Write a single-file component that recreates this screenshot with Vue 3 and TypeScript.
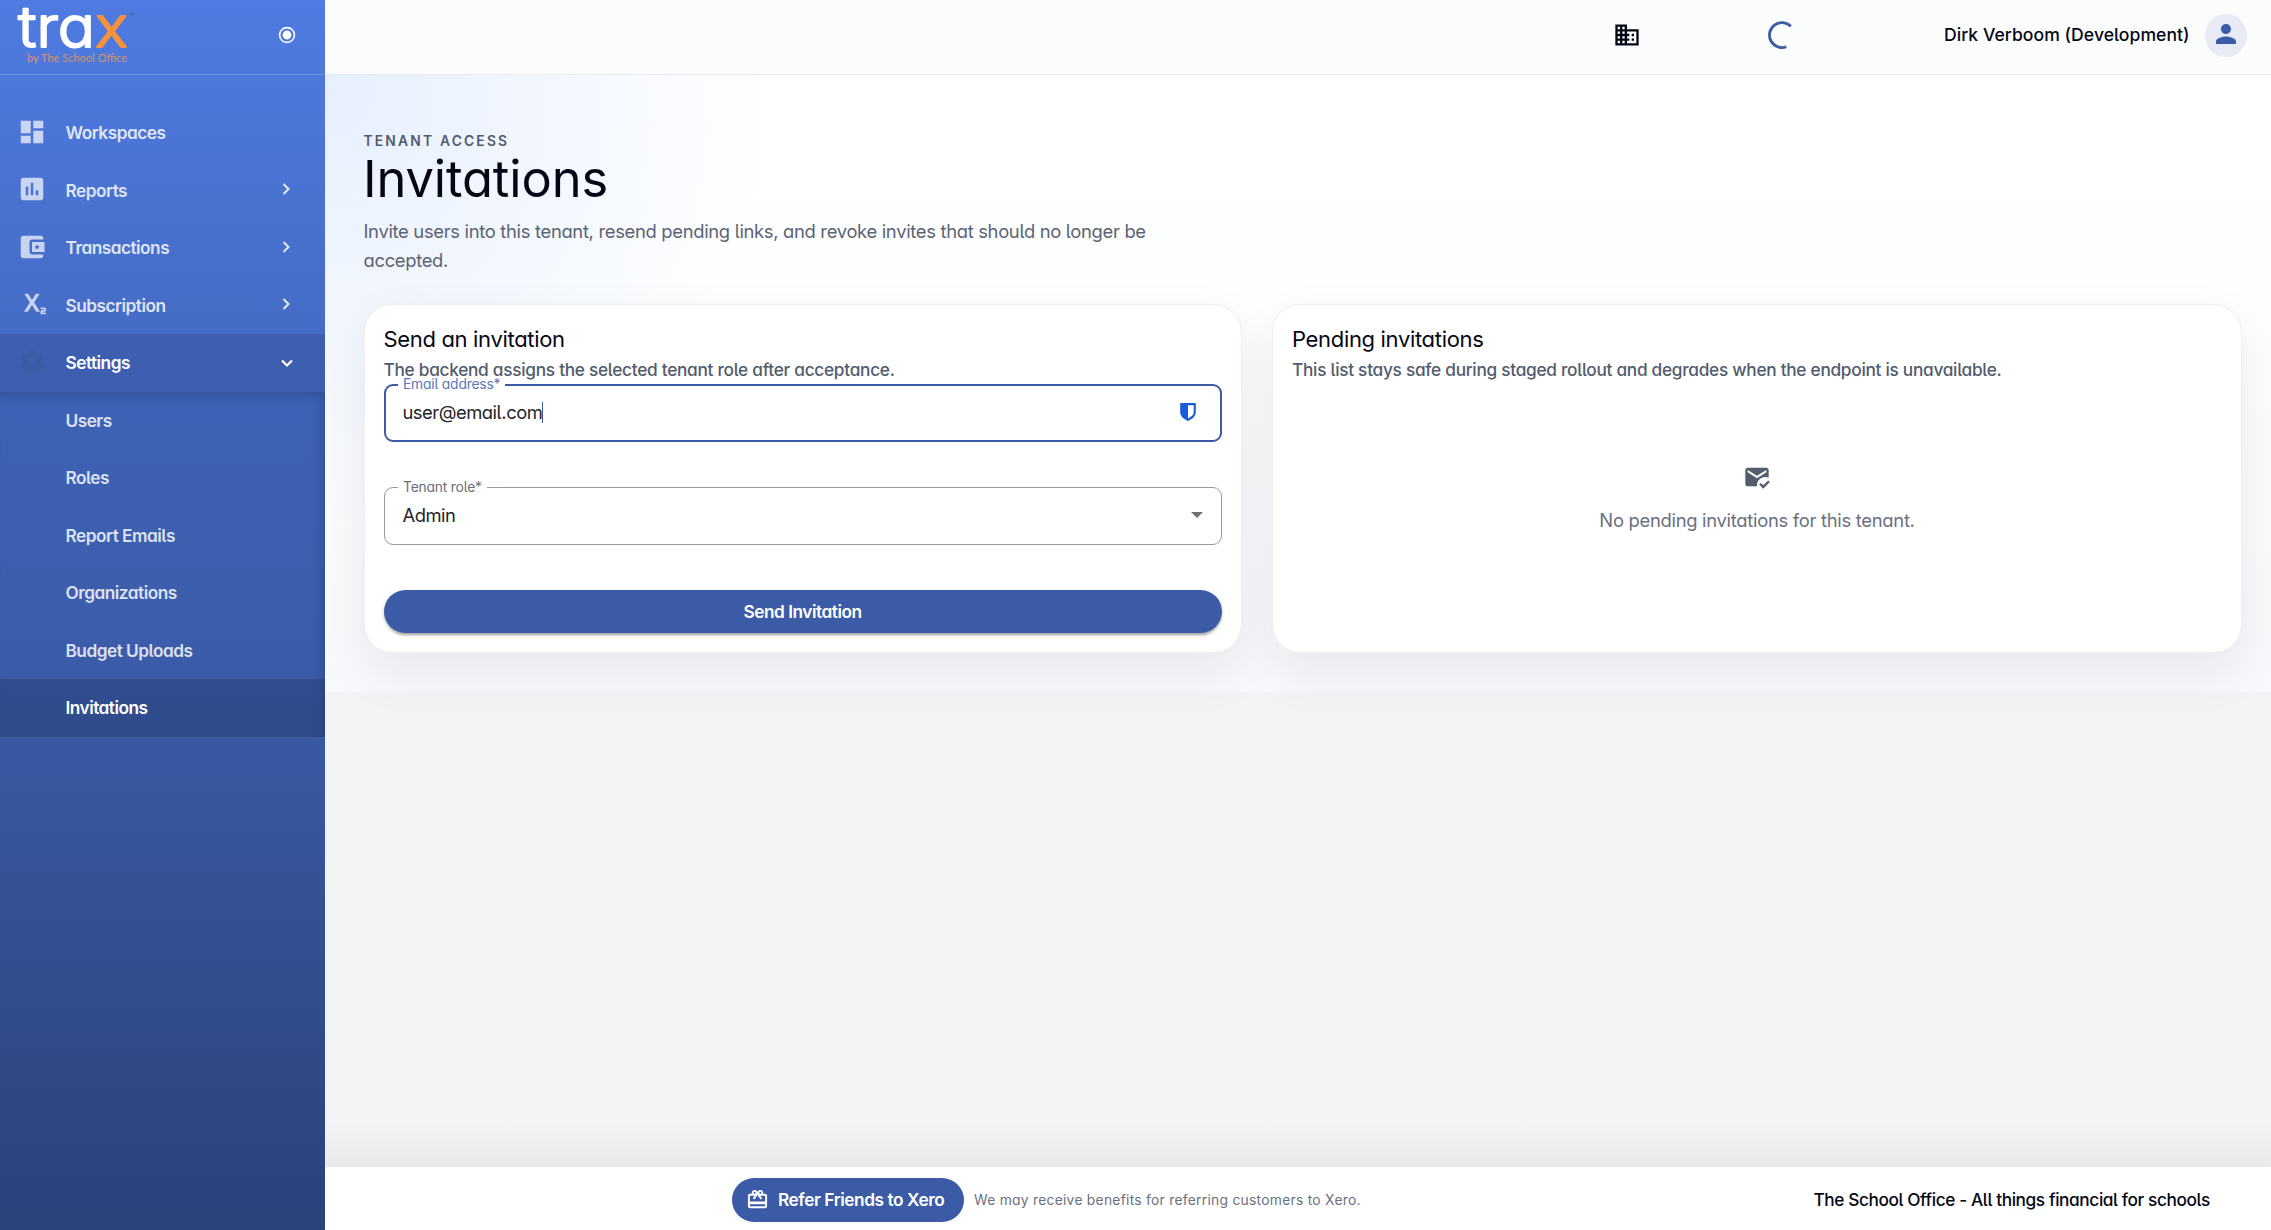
<script setup lang="ts">
interface NavItem {
  label: string
  icon: string
  arrow: boolean
}

const navItems: NavItem[] = [
  { label: 'Workspaces', arrow: false, icon: 'M3 13h8V3H3v10zm0 8h8v-6H3v6zm10 0h8V11h-8v10zm0-18v6h8V3h-8z' },
  { label: 'Reports', arrow: true, icon: 'M19 3H5c-1.1 0-2 .9-2 2v14c0 1.1.9 2 2 2h14c1.1 0 2-.9 2-2V5c0-1.1-.9-2-2-2zM9 17H7v-7h2v7zm4 0h-2V7h2v10zm4 0h-2v-4h2v4z' },
  { label: 'Transactions', arrow: true, icon: 'M21 18v1c0 1.1-.9 2-2 2H5c-1.11 0-2-.9-2-2V5c0-1.1.89-2 2-2h14c1.1 0 2 .9 2 2v1h-9c-1.11 0-2 .9-2 2v8c0 1.1.89 2 2 2h9zm-9-2h10V8H12v8zm4-2.5c-.83 0-1.5-.67-1.5-1.5s.67-1.5 1.5-1.5 1.5.67 1.5 1.5-.67 1.5-1.5 1.5z' },
  { label: 'Subscription', arrow: true, icon: 'M22 18h-2v1h3v1h-4v-2c0-.55.45-1 1-1h2v-1h-3v-1h3c.55 0 1 .45 1 1v1c0 .55-.45 1-1 1zM5.88 18h2.66l3.4-5.42h.12l3.4 5.42h2.66l-4.65-7.27L17.81 4h-2.68l-3.07 4.99h-.12L8.87 4H6.19l4.32 6.73L5.88 18z' },
]

const settingsItems: string[] = ['Users', 'Roles', 'Report Emails', 'Organizations', 'Budget Uploads', 'Invitations']
const current = 'Invitations'
</script>

<template>
  <div class="app">
    <aside class="sidebar">
      <div class="brand">
        <svg class="logo" width="140" height="74" viewBox="0 0 140 74">
          <g class="wordmark" font-size="57">
            <text x="18" y="47.3" textLength="77" lengthAdjust="spacingAndGlyphs" fill="#fff" stroke="#fff">tra</text>
            <text x="95" y="47.3" textLength="33" lengthAdjust="spacingAndGlyphs" fill="#f5923e" stroke="#f5923e">x</text>
          </g>
          <text class="byline" x="27" y="62" textLength="100">by The School Office</text>
          <text class="tm" x="129" y="15.500">TM</text>
        </svg>
        <svg class="pin" width="18" height="18" viewBox="0 0 18 18">
          <circle cx="9" cy="9" r="7.4" fill="none" stroke="#fff" stroke-width="1.6" />
          <circle cx="9" cy="9" r="4.4" fill="#fff" />
        </svg>
      </div>
      <nav class="nav">
        <a v-for="item in navItems" :key="item.label" class="row">
          <svg class="row-icon" :class="{ heavy: item.label === 'Subscription' }" viewBox="0 0 24 24"><path :d="item.icon" /></svg>
          <span>{{ item.label }}</span>
          <svg v-if="item.arrow" class="arrow" viewBox="0 0 12 12"><path d="M3.5 1l5 5-5 5" /></svg>
        </a>
        <a class="row open">
          <svg class="row-icon gear" viewBox="0 0 24 24"><path d="M19.14 12.94c.04-.3.06-.61.06-.94 0-.32-.02-.64-.07-.94l2.03-1.58c.18-.14.23-.41.12-.61l-1.92-3.32c-.12-.22-.37-.29-.59-.22l-2.39.96c-.5-.38-1.03-.7-1.62-.94l-.36-2.54c-.04-.24-.24-.41-.48-.41h-3.84c-.24 0-.43.17-.47.41l-.36 2.54c-.59.24-1.13.57-1.62.94l-2.39-.96c-.22-.08-.47 0-.59.22L2.74 8.87c-.12.21-.08.47.12.61l2.03 1.58c-.05.3-.09.63-.09.94s.02.64.07.94l-2.03 1.58c-.18.14-.23.41-.12.61l1.92 3.32c.12.22.37.29.59.22l2.39-.96c.5.38 1.03.7 1.62.94l.36 2.54c.05.24.24.41.48.41h3.84c.24 0 .44-.17.47-.41l.36-2.54c.59-.24 1.13-.56 1.62-.94l2.39.96c.22.08.47 0 .59-.22l1.92-3.32c.12-.22.07-.47-.12-.61l-2.01-1.58zM12 15.6c-1.98 0-3.6-1.62-3.6-3.6s1.62-3.6 3.6-3.6 3.6 1.62 3.6 3.6-1.62 3.6-3.6 3.6z" /></svg>
          <span>Settings</span>
          <svg class="arrow down" viewBox="0 0 12 12"><path d="M1 3.5l5 5 5-5" /></svg>
        </a>
        <div class="submenu">
          <a v-for="label in settingsItems" :key="label" class="row sub" :class="{ active: label === current }">
            <span>{{ label }}</span>
          </a>
        </div>
      </nav>
    </aside>

    <div class="main">
      <header class="topbar">
        <svg class="building" viewBox="0 0 24 24"><path d="M12 7V3H2v18h20V7H12zM6 19H4v-2h2v2zm0-4H4v-2h2v2zm0-4H4V9h2v2zm0-4H4V5h2v2zm4 12H8v-2h2v2zm0-4H8v-2h2v2zm0-4H8V9h2v2zm0-4H8V5h2v2zm10 12h-8v-2h2v-2h-2v-2h2v-2h-2V9h8v10zm-2-8h-2v2h2v-2zm0 4h-2v2h2v-2z" /></svg>
        <svg class="spinner" viewBox="0 0 28 28"><path d="M22.8 5.2A12.5 12.5 0 1 0 18.3 25.8" /></svg>
        <span class="user">Dirk Verboom (Development)</span>
        <span class="avatar">
          <svg viewBox="0 0 24 24"><path d="M12 12c2.21 0 4-1.79 4-4s-1.79-4-4-4-4 1.79-4 4 1.79 4 4 4zm0 2c-2.67 0-8 1.34-8 4v2h16v-2c0-2.66-5.33-4-8-4z" /></svg>
        </span>
      </header>

      <main class="page">
        <div class="eyebrow">Tenant access</div>
        <h1>Invitations</h1>
        <p class="lead">Invite users into this tenant, resend pending links, and revoke invites that should no longer be<br>accepted.</p>

        <div class="cards">
          <section class="card send">
            <h2>Send an invitation</h2>
            <p class="sub-title">The backend assigns the selected tenant role after acceptance.</p>
            <div class="field focused">
              <label>Email address*</label>
              <span class="value">user@email.com</span><i class="caret"></i>
              <svg class="shield" viewBox="0 0 16 18"><path fill-rule="evenodd" d="M.8 0h14.4q.6 0 .6.6v9c0 3.700-3.500 6.500-7.800 8.400C3.700 16.100.2 13.300.2 9.600V.6Q.2 0 .8 0zM8 2.200v13.200c3.300-1.700 5.700-3.500 5.700-5.800V2.200z" /></svg>
            </div>
            <div class="field">
              <label>Tenant role*</label>
              <span class="value">Admin</span>
              <svg class="caret-down" viewBox="0 0 12 6"><path d="M0 0h12L6 6z" /></svg>
            </div>
            <button class="submit" type="button">Send Invitation</button>
          </section>

          <section class="card pending">
            <h2>Pending invitations</h2>
            <p class="sub-title">This list stays safe during staged rollout and degrades when the endpoint is unavailable.</p>
            <div class="empty">
              <svg viewBox="0 0 24 24"><path d="M12 19c0-3.870 3.130-7 7-7 1.080 0 2.090.25 3 .68V6c0-1.100-.9-2-2-2H4c-1.100 0-2 .9-2 2v12c0 1.100.9 2 2 2h8.080c-.05-.33-.08-.66-.08-1zM4 6l8 5 8-5v2l-8 5-8-5V6zm13.340 16l-3.540-3.540 1.410-1.410 2.120 2.120 4.240-4.240L23 16.340 17.340 22z" /></svg>
              <span>No pending invitations for this tenant.</span>
            </div>
          </section>
        </div>
      </main>

      <div class="filler"></div>

      <footer class="footer">
        <button class="refer" type="button">
          <svg viewBox="0 0 24 24"><path d="M20 6h-2.180c.11-.31.18-.65.18-1 0-1.660-1.340-3-3-3-1.050 0-1.960.54-2.500 1.350l-.5.67-.5-.68C10.960 2.540 10.050 2 9 2 7.340 2 6 3.340 6 5c0 .35.07.69.18 1H4c-1.110 0-1.990.89-1.990 2L2 19c0 1.110.89 2 2 2h16c1.110 0 2-.89 2-2V8c0-1.110-.89-2-2-2zm-5-2c.55 0 1 .45 1 1s-.45 1-1 1-1-.45-1-1 .45-1 1-1zM9 4c.55 0 1 .45 1 1s-.45 1-1 1-1-.45-1-1 .45-1 1-1zm11 15H4v-2h16v2zm0-5H4V8h5.080L7 10.830 8.620 12 11 8.760l1-1.360 1 1.360L15.380 12 17 10.830 14.920 8H20v6z" /></svg>
          <span>Refer Friends to Xero</span>
        </button>
        <span class="note">We may receive benefits for referring customers to Xero.</span>
        <span class="tagline">The School Office - All things financial for schools</span>
      </footer>
    </div>
  </div>
</template>

<style>
body {
  background: #f2f3f5;
}
</style>

<style scoped>
* {
  box-sizing: border-box;
}
.app {
  display: flex;
  width: 2271px;
  height: 1230px;
  overflow: hidden;
  font-family: Inter, "Liberation Sans", sans-serif;
  font-feature-settings: "cv11", "cv05";
  color: #050714;
}
h1, h2, p {
  margin: 0;
  font-weight: 400;
}
svg {
  display: block;
  flex: none;
}
button {
  border: 0;
  font-family: inherit;
  font-feature-settings: inherit;
  color: #fff;
  background: #3b5ba6;
}
span, label {
  white-space: nowrap;
}

/* Sidebar */
.sidebar {
  width: 325px;
  flex: none;
  background: linear-gradient(180deg, #4f7be2 0%, #3a5aa5 58%, #2b427a 100%);
}
.brand {
  display: flex;
  justify-content: space-between;
  height: 75px;
  border-bottom: 1px solid rgba(255, 255, 255, 0.18);
}
.logo {
  overflow: visible;
}
.wordmark {
  font-weight: 300;
  stroke-width: 1.9;
  stroke-linejoin: round;
}
.byline {
  font-family: Lato, sans-serif;
  font-size: 10.8px;
  fill: #d9926b;
}
.tm {
  font-size: 3px;
  fill: #35508f;
}
.pin {
  margin: 26px 29px 0 0;
}
.nav {
  padding-top: 29px;
}
.row {
  display: flex;
  align-items: center;
  height: 57.5px;
  padding: 0 31px 0 17px;
  font-size: 17.25px;
  font-weight: 600;
  letter-spacing: -0.5px;
  color: rgba(255, 255, 255, 0.84);
}
.row-icon {
  width: 30px;
  height: 30px;
  margin: -2px 18.5px 0 0;
  fill: rgba(255, 255, 255, 0.7);
}
.heavy {
  stroke: rgba(255, 255, 255, 0.7);
  stroke-width: 0.3;
}
.arrow {
  width: 12px;
  height: 12px;
  margin: -2px 2px 0 auto;
  fill: none;
  stroke: rgba(255, 255, 255, 0.85);
  stroke-width: 2;
}
.open {
  color: #fff;
  background: #3e5fb0;
}
.open .arrow {
  margin: 0 1px 0 auto;
  stroke: #fff;
  stroke-width: 2.2;
}
.gear {
  fill: #3b5ba6;
}
.submenu {
  background: linear-gradient(180deg, rgba(30, 60, 120, 0.16), rgba(30, 60, 120, 0.02) 70%);
  box-shadow: inset -6px 6px 12px -4px rgba(20, 35, 80, 0.3);
}
.sub {
  padding-left: 65.5px;
}
.active {
  color: #fff;
  background: rgba(30, 45, 90, 0.3);
}

/* Top bar */
.main {
  display: flex;
  flex-direction: column;
  width: 1946px;
  background: #f2f3f5;
}
.topbar {
  display: flex;
  align-items: center;
  height: 75px;
  flex: none;
  padding: 0 24px 4px 1288px;
  border-bottom: 1px solid #e9ecee;
  background: #fbfdfc;
}
.building {
  width: 28px;
  height: 28px;
  margin-top: -1px;
  fill: #050714;
}
.spinner {
  width: 28px;
  height: 28px;
  margin-left: 127px;
  fill: none;
  stroke: #3b5ba6;
  stroke-width: 2.8;
}
.user {
  width: 246px;
  margin: -2px 0 0 148px;
  font-size: 17.6px;
  font-weight: 450;
  letter-spacing: 0.03px;
}
.avatar {
  display: flex;
  align-items: center;
  justify-content: center;
  width: 43px;
  height: 43px;
  margin-left: 15px;
  border-radius: 50%;
  background: #e8ebf5;
}
.avatar svg {
  width: 30px;
  height: 30px;
  margin-top: -2px;
  fill: #3b5ba6;
}

/* Page */
.page {
  height: 617px;
  flex: none;
  padding: 57px 29px 0 38.5px;
  background:
    radial-gradient(circle at 0 0, rgba(66, 133, 255, 0.13) 0, rgba(66, 133, 255, 0) 450px),
    linear-gradient(180deg, #fff 0%, #fdfefe 40%, #f8f9fc 100%);
}
.eyebrow {
  height: 19px;
  font-size: 13.8px;
  line-height: 19px;
  font-weight: 600;
  letter-spacing: 2.2px;
  text-transform: uppercase;
  color: #525a6b;
}
h1 {
  height: 58px;
  margin-left: -0.5px;
  font-size: 50.6px;
  line-height: 56px;
  letter-spacing: -0.1px;
}
.lead {
  margin-top: 8px;
  font-size: 18.4px;
  line-height: 29px;
  letter-spacing: -0.317px;
  white-space: nowrap;
  color: #5b6475;
}
.cards {
  display: flex;
  gap: 30.5px;
  margin-top: 29px;
}
.card {
  display: flex;
  flex-direction: column;
  height: 349px;
  padding: 19px 19px 19px;
  border: 1px solid #eceef3;
  border-radius: 28px;
  background: #fff;
  box-shadow: 0 20px 50px rgba(15, 23, 42, 0.08);
}
.send {
  width: 878px;
}
.pending {
  width: 970px;
}
h2 {
  height: 31px;
  font-size: 22px;
  line-height: 31px;
  letter-spacing: -0.33px;
}
.sub-title {
  height: 29px;
  font-size: 17.25px;
  line-height: 29px;
  font-weight: 450;
  letter-spacing: -0.28px;
  white-space: nowrap;
  color: #525c6d;
}
.field {
  position: relative;
  display: flex;
  align-items: center;
  width: 838px;
  height: 58px;
  flex: none;
  margin-bottom: 45px;
  padding: 0 18px 2px 18px;
  border: 1px solid #9a9a9c;
  border-radius: 9px;
}
.focused {
  padding: 0 24px 2px 17px;
  border: 2px solid #3b5ba6;
}
.field label {
  position: absolute;
  top: -9px;
  left: 13.5px;
  padding: 0 5px;
  font-size: 13.8px;
  line-height: 16px;
  letter-spacing: -0.17px;
  color: #6b6f78;
  background: linear-gradient(180deg, transparent 7px, #fff 7px, #fff 10px, transparent 10px);
}
.focused label {
  top: -10px;
  left: 12.5px;
  color: #5b76bb;
}
.value {
  font-size: 18.4px;
  letter-spacing: -0.5px;
  color: #25262b;
}
.caret {
  width: 1px;
  height: 21px;
  background: #3b5ba6;
}
.shield {
  width: 16px;
  height: 18px;
  margin-left: auto;
  fill: #175ddc;
}
.caret-down {
  width: 12px;
  height: 6px;
  margin-left: auto;
  fill: #717173;
}
.submit {
  height: 43px;
  flex: none;
  padding: 0;
  border-radius: 22px;
  font-size: 17.25px;
  font-weight: 600;
  letter-spacing: -0.46px;
  box-shadow: 0 3px 3px -1px rgba(0, 0, 0, 0.3), 0 1px 4px rgba(0, 0, 0, 0.15);
}
.empty {
  display: flex;
  flex-direction: column;
  align-items: center;
  padding-top: 79px;
  font-size: 18.4px;
  letter-spacing: -0.29px;
  color: #6a7180;
}
.empty svg {
  width: 28px;
  height: 28px;
  margin-bottom: 18px;
  fill: #545d6c;
}

/* Footer */
.filler {
  flex: 1;
  background: linear-gradient(180deg, transparent 0, transparent calc(100% - 45px), #e9eaec 100%);
}
.footer {
  display: flex;
  align-items: center;
  height: 63px;
  padding: 2px 61px 0 407px;
  background: #fff;
}
.refer {
  display: flex;
  align-items: center;
  width: 232px;
  height: 44px;
  padding: 0 0 0 14px;
  border-radius: 22px;
  font-size: 17.25px;
  font-weight: 600;
  letter-spacing: -0.43px;
}
.refer svg {
  width: 23px;
  height: 23px;
  margin-right: 9px;
  fill: #fff;
}
.note {
  margin-left: 10px;
  font-size: 13.8px;
  letter-spacing: 0.28px;
  color: #6a7180;
}
.tagline {
  margin-left: auto;
  font-size: 17.25px;
  font-weight: 450;
  letter-spacing: -0.395px;
}
</style>
